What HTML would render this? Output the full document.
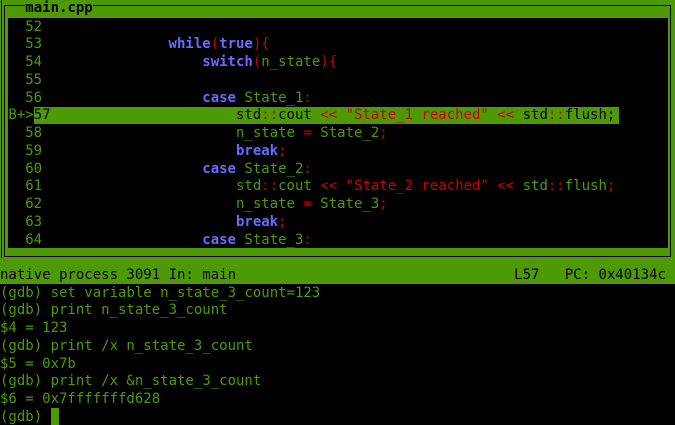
<!DOCTYPE html>
<html><head><meta charset="utf-8"><style>
html,body{margin:0;padding:0;background:#000;width:675px;height:425px;overflow:hidden}
body{position:relative;font-family:"DejaVu Sans Mono","Liberation Mono",monospace;font-size:14px}
#top{position:absolute;left:0;top:0;width:675px;height:284px;background:#4e9a06}
.ln{position:absolute;background:#000}
#code{position:absolute;left:8px;top:17.75px;width:660px;height:230px;background:#000}
pre{margin:0;font:inherit;line-height:17.75px;position:absolute;white-space:pre}
.g{color:#4e9a06}.b{color:#6a6aff;font-weight:bold}.r{color:#c00}.k{color:#000}
#hl{position:absolute;left:33.7px;top:106.5px;width:585px;height:17.75px;background:#4e9a06}
#cur{position:absolute;left:50.6px;top:408px;width:8.4px;height:17px;background:#4e9a06}
</style></head><body>
<div id="top"></div>
<div class="ln" style="left:1px;top:0;width:1px;height:258px"></div>
<div class="ln" style="left:4px;top:5px;width:1px;height:252px"></div>
<div class="ln" style="left:4px;top:5px;width:666px;height:1px"></div>
<div class="ln" style="left:4px;top:256px;width:666px;height:1px"></div>
<div class="ln" style="left:670px;top:5px;width:1px;height:252px"></div>
<div id="code"></div>
<div id="hl"></div>
<pre style="left:25.3px;top:0;background:#4e9a06;font-weight:bold" class="k">main.cpp</pre>
<pre style="left:8.4px;top:18.5px" class="g">  52
  53               <span class="b">while</span><span class="r">(</span><span class="b">true</span><span class="r">){</span>
  54                   <span class="b">switch</span><span class="r">(</span>n_state<span class="r">){</span>
  55
  56                   <span class="b">case</span> State_1<span class="r">:</span>
<span class="g">B+></span><span class="k">57                      std<span class="r">::</span>cout <span class="r">&lt;&lt; "State_1 reached" &lt;&lt;</span> std<span class="r">::</span>flush;</span>
  58                       n_state <span class="r">=</span> State_2<span class="r">;</span>
  59                       <span class="b">break</span><span class="r">;</span>
  60                   <span class="b">case</span> State_2<span class="r">:</span>
  61                       std<span class="r">::</span>cout <span class="r">&lt;&lt; "State_2 reached" &lt;&lt;</span> std<span class="r">::</span>flush<span class="r">;</span>
  62                       n_state <span class="r">=</span> State_3<span class="r">;</span>
  63                       <span class="b">break</span><span class="r">;</span>
  64                   <span class="b">case</span> State_3<span class="r">:</span></pre>
<pre style="left:0;top:267px" class="k">native process 3091 In: main                                 L57   PC: 0x40134c</pre>
<pre style="left:0;top:284.5px" class="g">(gdb) set variable n_state_3_count=123
(gdb) print n_state_3_count
$4 = 123
(gdb) print /x n_state_3_count
$5 = 0x7b
(gdb) print /x &amp;n_state_3_count
$6 = 0x7fffffffd628
(gdb) </pre>
<div id="cur"></div>
</body></html>
